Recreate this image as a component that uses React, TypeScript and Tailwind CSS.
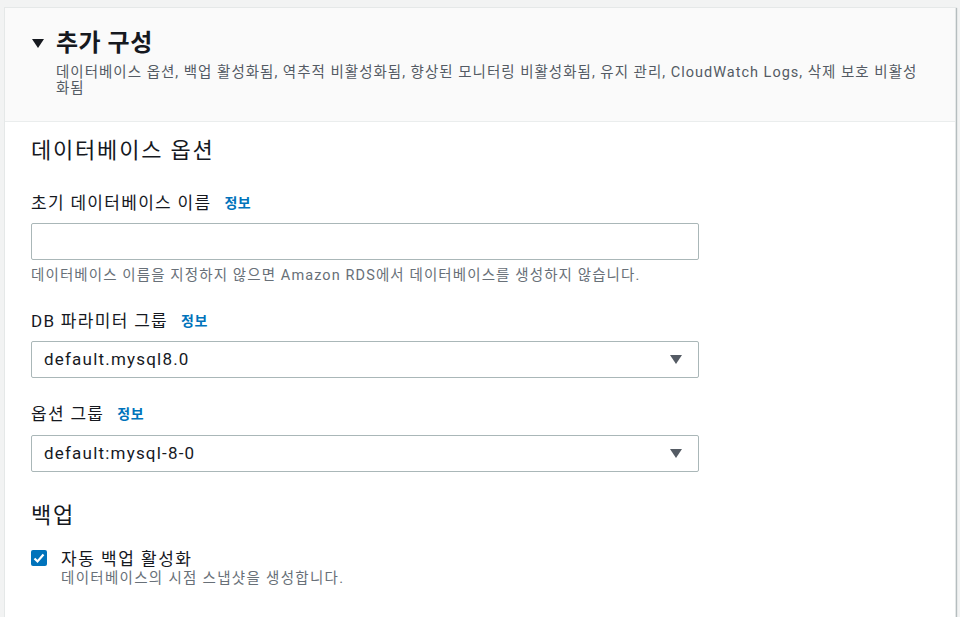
const FONT = "font-['Roboto','Noto_Sans_CJK_KR',sans-serif]"

function InfoLink() {
  return <span className="ml-[13px] text-[14px] font-bold tracking-[0.5px] text-[#0073bb]">정보</span>
}

function Caret({ className }: { className: string }) {
  return (
    <svg viewBox="0 0 12 9" className={className}>
      <path d="M0 0H12L6 9Z" fill="currentColor" />
    </svg>
  )
}

function SelectBox({ value }: { value: string }) {
  return (
    <div className="flex h-[37px] w-[668px] items-center justify-between rounded-[2px] border border-[#aab7b8] bg-white pl-[12px] pr-[16px]">
      <span className="text-[17px] tracking-[1.2px] text-[#16191f]">{value}</span>
      <Caret className="h-[9px] w-[12px] text-[#545b64]" />
    </div>
  )
}

function Label({ text }: { text: string }) {
  return (
    <div className="flex h-[22px] items-center text-[17px] leading-[22px] tracking-[1.3px] text-[#16191f]">
      <span>{text}</span>
      <InfoLink />
    </div>
  )
}

export default function App() {
  return (
    <div className={`${FONT} h-[617px] overflow-hidden bg-[#f2f3f3] px-[4px] pt-[7px]`}>
      <div className="border border-[#e5e8e8] bg-white shadow-[1px_1px_1px_0_rgba(0,28,36,0.25)]">
        {/* header */}
        <div className="border-b border-[#eaeded] bg-[#fafafa] pb-[24px] pl-[27px] pr-[30px] pt-[19px]">
          <div className="flex h-[32px] items-center">
            <Caret className="h-[9px] w-[12px] text-[#16191f]" />
            <span className="ml-[12px] text-[24px] font-bold leading-[32px] tracking-[0.5px] text-[#16191f]">추가 구성</span>
          </div>
          <p className="mt-[6px] pl-[24px] text-[14.5px] leading-[16px] tracking-[1px] text-[#545b64]">
            데이터베이스 옵션, 백업 활성화됨, 역추적 비활성화됨, 향상된 모니터링 비활성화됨, 유지 관리, CloudWatch Logs, 삭제 보호 비활성화됨
          </p>
        </div>

        {/* body */}
        <div className="flex flex-col pb-[80px] pl-[26px]">
          <h2 className="mt-[15px] text-[22px] leading-[28px] tracking-[1.8px] text-[#16191f]">데이터베이스 옵션</h2>

          <div className="mt-[27px]">
            <Label text="초기 데이터베이스 이름" />
          </div>
          <div className="mt-[9px] h-[37px] w-[668px] rounded-[2px] border border-[#aab7b8] bg-white" />
          <p className="mt-[8px] text-[14.5px] leading-[16px] tracking-[1.1px] text-[#687078]">
            데이터베이스 이름을 지정하지 않으면 Amazon RDS에서 데이터베이스를 생성하지 않습니다.
          </p>

          <div className="mt-[26px]">
            <Label text="DB 파라미터 그룹" />
          </div>
          <div className="mt-[9px]">
            <SelectBox value="default.mysql8.0" />
          </div>

          <div className="mt-[25px]">
            <Label text="옵션 그룹" />
          </div>
          <div className="mt-[10px]">
            <SelectBox value="default:mysql-8-0" />
          </div>

          <h2 className="mt-[30px] text-[22px] leading-[28px] tracking-[1.8px] text-[#16191f]">백업</h2>

          <div className="mt-[17px] flex">
            <div className="mt-[3px] flex h-[16px] w-[16px] items-center justify-center rounded-[2px] bg-[#0073bb]">
              <svg viewBox="0 0 16 16" className="h-[16px] w-[16px]">
                <path d="M3.5 8.5L6.5 11.5L12.5 4.5" fill="none" stroke="white" strokeWidth="2.2" />
              </svg>
            </div>
            <div className="ml-[14px] flex flex-col">
              <span className="text-[17px] leading-[24px] tracking-[1.5px] text-[#16191f]">자동 백업 활성화</span>
              <span className="text-[14.5px] leading-[16px] tracking-[1.3px] text-[#687078]">데이터베이스의 시점 스냅샷을 생성합니다.</span>
            </div>
          </div>
        </div>
      </div>
    </div>
  )
}
